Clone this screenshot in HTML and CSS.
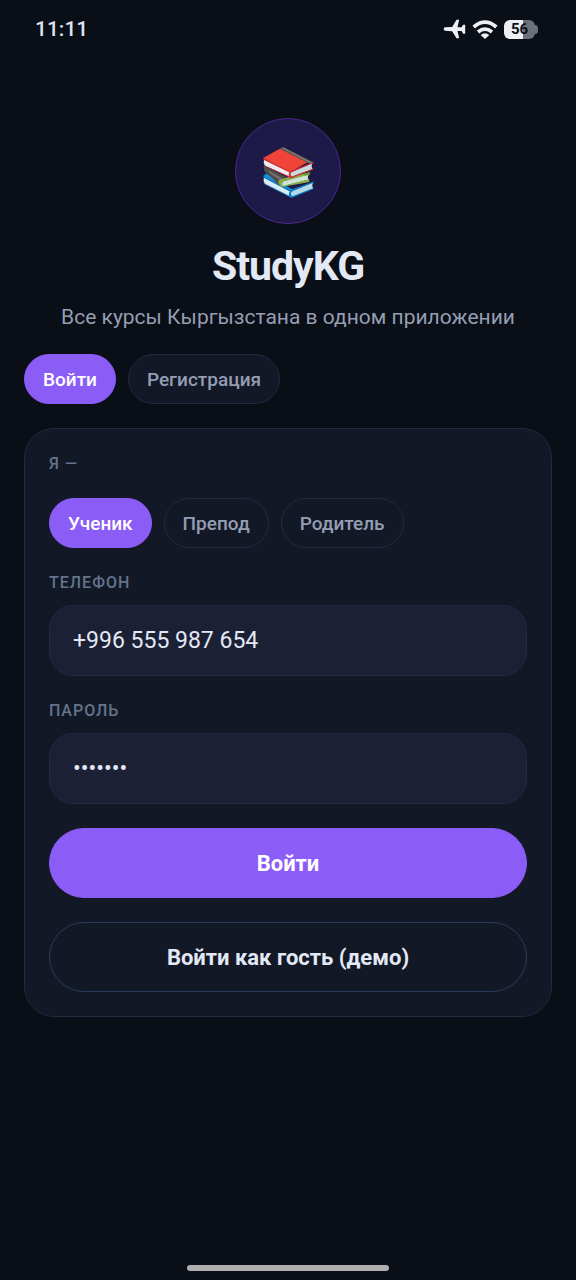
FILE: index.html
```html
<!DOCTYPE html>
<html lang="ru">
<head>
<meta charset="utf-8">
<meta name="viewport" content="width=device-width, initial-scale=1">
<title>StudyKG</title>
<link rel="stylesheet" href="styles.css">
</head>
<body>
<div class="screen">
  <header class="status">
    <time class="status-time">11:11</time>
    <div class="status-icons">
      <svg class="icon-plane" viewBox="26 25 66 60" aria-hidden="true"><path d="M30 50 Q23 55 30 60 L52 62 L65 83 H73 L68 61 L80 61 L85 69 H91 V42 H85 L80 50 L68 50 L73 27 H65 L52 49 Z"/></svg>
      <svg class="icon-wifi" viewBox="108 27 78 57" aria-hidden="true"><g fill="none" stroke="currentColor" stroke-width="11"><path d="M113 48 Q147 19 181 48"/><path d="M126 63 Q147 46 168 63"/></g><path d="M134 72 Q147 62 160 72 L147 84 Z"/></svg>
      <div class="battery"><span class="battery-level">56</span></div>
    </div>
  </header>

  <main class="content">
    <div class="hero">
      <div class="logo">
        <svg class="books" viewBox="98 106 164 158" aria-hidden="true">
          <path fill="#075ca4" d="M105 196 L112 190 L190 241 L255 215 L253 222 L190 252 L106 208 Z"/>
          <path fill="#1c8ed3" d="M106 200 L114 192 L190 238 L253 216 L188 244 Z"/>
          <path fill="#d8edf5" d="M107 203 L185 243 L188 262 L110 223 Q103 213 107 203 Z"/>
          <path fill="#b5d9e5" d="M187 244 L254 217 Q248 226 254 236 L190 261 Q181 253 187 244 Z"/>
          <path fill="#087ac4" d="M106 199 L187 241 L255 215 V218 L190 245 Q184 253 191 259 L255 234 V237 L189 264 L106 221 V219 L182 257 Q179 249 184 245 L106 204 Z"/>
          <path fill="#4c4f4d" d="M106 168 L176 203 L151 226 Q134 204 108 184 Z"/>
          <path fill="#77736b" d="M120 182 L165 207 L159 213 L123 189 Z"/>
          <path fill="#8cad3d" d="M151 211 L179 202 L244 187 V194 L164 214 Q157 220 164 228 L242 208 V216 L160 231 Q147 223 151 211 Z"/>
          <path fill="#cce5d0" d="M165 214 L241 194 Q235 201 240 209 L164 228 Q157 220 165 214 Z"/>
          <path fill="#6f9732" d="M228 191 L244 187 V194 L228 198 Z"/>
          <path fill="#f04438" d="M104 145 L158 115 L238 157 L184 187 Z"/>
          <path fill="#525458" d="M154 117 L163 113 L256 158 L243 162 Z"/>
          <path fill="#85796f" d="M160 115 L165 113 L251 158 L246 161 Z"/>
          <path fill="#f0eaec" d="M107 150 L184 187 L186 203 L110 168 Q104 159 107 150 Z"/>
          <path fill="#c8dce0" d="M187 187 L252 160 Q246 169 252 178 L190 201 Q181 195 187 187 Z"/>
          <path fill="#d52d2e" d="M104 145 L184 184 L255 157 V160 L189 187 Q182 194 190 200 L254 176 V179 L188 205 L107 168 V166 L182 199 Q178 191 183 187 L106 150 Z"/>
        </svg>
      </div>
      <h1 class="title">StudyKG</h1>
      <p class="subtitle">Все курсы Кыргызстана в одном приложении</p>
    </div>

    <nav class="chips tabs" aria-label="Вход и регистрация">
      <button class="chip chip-active" type="button" aria-pressed="true">Войти</button>
      <button class="chip chip-filled" type="button" aria-pressed="false">Регистрация</button>
    </nav>

    <form class="card">
      <div class="label" id="role-label">Я —</div>
      <div class="chips" role="group" aria-labelledby="role-label">
        <button class="chip chip-active" type="button" aria-pressed="true">Ученик</button>
        <button class="chip" type="button" aria-pressed="false">Препод</button>
        <button class="chip" type="button" aria-pressed="false">Родитель</button>
      </div>
      <div class="field">
        <label class="label" for="phone">ТЕЛЕФОН</label>
        <input class="input" id="phone" type="tel" value="+996 555 987 654">
      </div>
      <div class="field">
        <label class="label" for="password">ПАРОЛЬ</label>
        <input class="input" id="password" type="password" value="1234567" autocomplete="off">
      </div>
      <button class="button button-primary" type="submit">Войти</button>
      <button class="button button-outline" type="button">Войти как гость (демо)</button>
    </form>
  </main>

  <footer class="home"><div class="home-bar"></div></footer>
</div>
</body>
</html>
```
FILE: styles.css
```css
* {
  box-sizing: border-box;
}

body {
  margin: 0;
  background: #0a0e17;
  color: #e2e8f4;
  font-family: Roboto, "Noto Sans", sans-serif;
}

button,
input {
  margin: 0;
  font-family: inherit;
  color: inherit;
}

.screen {
  min-height: 100vh;
  display: flex;
  flex-direction: column;
}

.status {
  display: flex;
  justify-content: space-between;
  align-items: center;
  height: 58px;
  padding: 0 38px 0 35px;
}

.status-time {
  font-size: 21px;
  font-weight: 500;
  line-height: 26px;
  color: #dfe4ee;
}

.status-icons {
  display: flex;
  align-items: center;
  gap: 6px;
  color: #eceff4;
}

.status-icons svg {
  display: block;
  fill: currentColor;
}

.icon-plane {
  width: 23px;
  height: 20px;
}

.icon-wifi {
  width: 26px;
  height: 19px;
}

.battery {
  display: flex;
  align-items: center;
}

.battery-level {
  width: 31px;
  border-radius: 6px;
  background: linear-gradient(to right, #eceff4 60%, #6c707b 60%);
  color: #0a0e17;
  font-size: 15px;
  font-weight: 700;
  line-height: 19px;
  text-align: center;
}

.battery::after {
  content: "";
  width: 3px;
  height: 9px;
  border-radius: 0 4px 4px 0;
  background: #6c707b;
}

.content {
  flex: 1;
  padding: 60px 24px 24px;
}

.hero {
  display: flex;
  flex-direction: column;
  align-items: center;
  text-align: center;
}

.logo {
  display: grid;
  place-items: center;
  width: 106px;
  height: 106px;
  border: 1px solid #4c2590;
  border-radius: 50%;
  background: #1e1a48;
}

.books {
  width: 55px;
  height: 53px;
}

.title {
  margin: 17px 0 12px;
  font-size: 41px;
  font-weight: 700;
  line-height: 50px;
  letter-spacing: -1px;
}

.subtitle {
  margin: 0;
  font-size: 21px;
  line-height: 28px;
  color: #949eb2;
}

.chips {
  display: flex;
  flex-wrap: wrap;
  gap: 12px;
}

.tabs {
  margin: 23px 0 24px;
}

.chip {
  height: 50px;
  padding: 0 18px;
  border: 1px solid #202b3e;
  border-radius: 25px;
  background: transparent;
  color: #949eb2;
  font-size: 19px;
  font-weight: 500;
}

.chip-filled {
  background: #131827;
}

.chip-active {
  border-color: #8b5cf6;
  background: #8b5cf6;
  color: #ffffff;
}

.card {
  display: flex;
  flex-direction: column;
  gap: 24px;
  padding: 24px;
  border: 1px solid #202b3e;
  border-radius: 30px;
  background: #131827;
}

.field {
  display: flex;
  flex-direction: column;
  gap: 12px;
}

.label {
  font-size: 16px;
  font-weight: 500;
  line-height: 21px;
  letter-spacing: 1px;
  color: #64748b;
}

.input {
  width: 100%;
  height: 71px;
  padding: 0 23px;
  border: 1px solid #202b3e;
  border-radius: 24px;
  background: #1b2035;
  font-size: 23px;
}

.button {
  height: 70px;
  border: 1px solid transparent;
  border-radius: 35px;
  font-size: 22px;
  font-weight: 700;
}

.button-primary {
  background: #8b5cf6;
  border-color: #8b5cf6;
  color: #ffffff;
}

.button-outline {
  background: transparent;
  border-color: #2b3a5a;
}

.home {
  display: flex;
  justify-content: center;
  padding-bottom: 9px;
}

.home-bar {
  width: 35%;
  height: 6px;
  border-radius: 3px;
  background: #afafb2;
}
```
